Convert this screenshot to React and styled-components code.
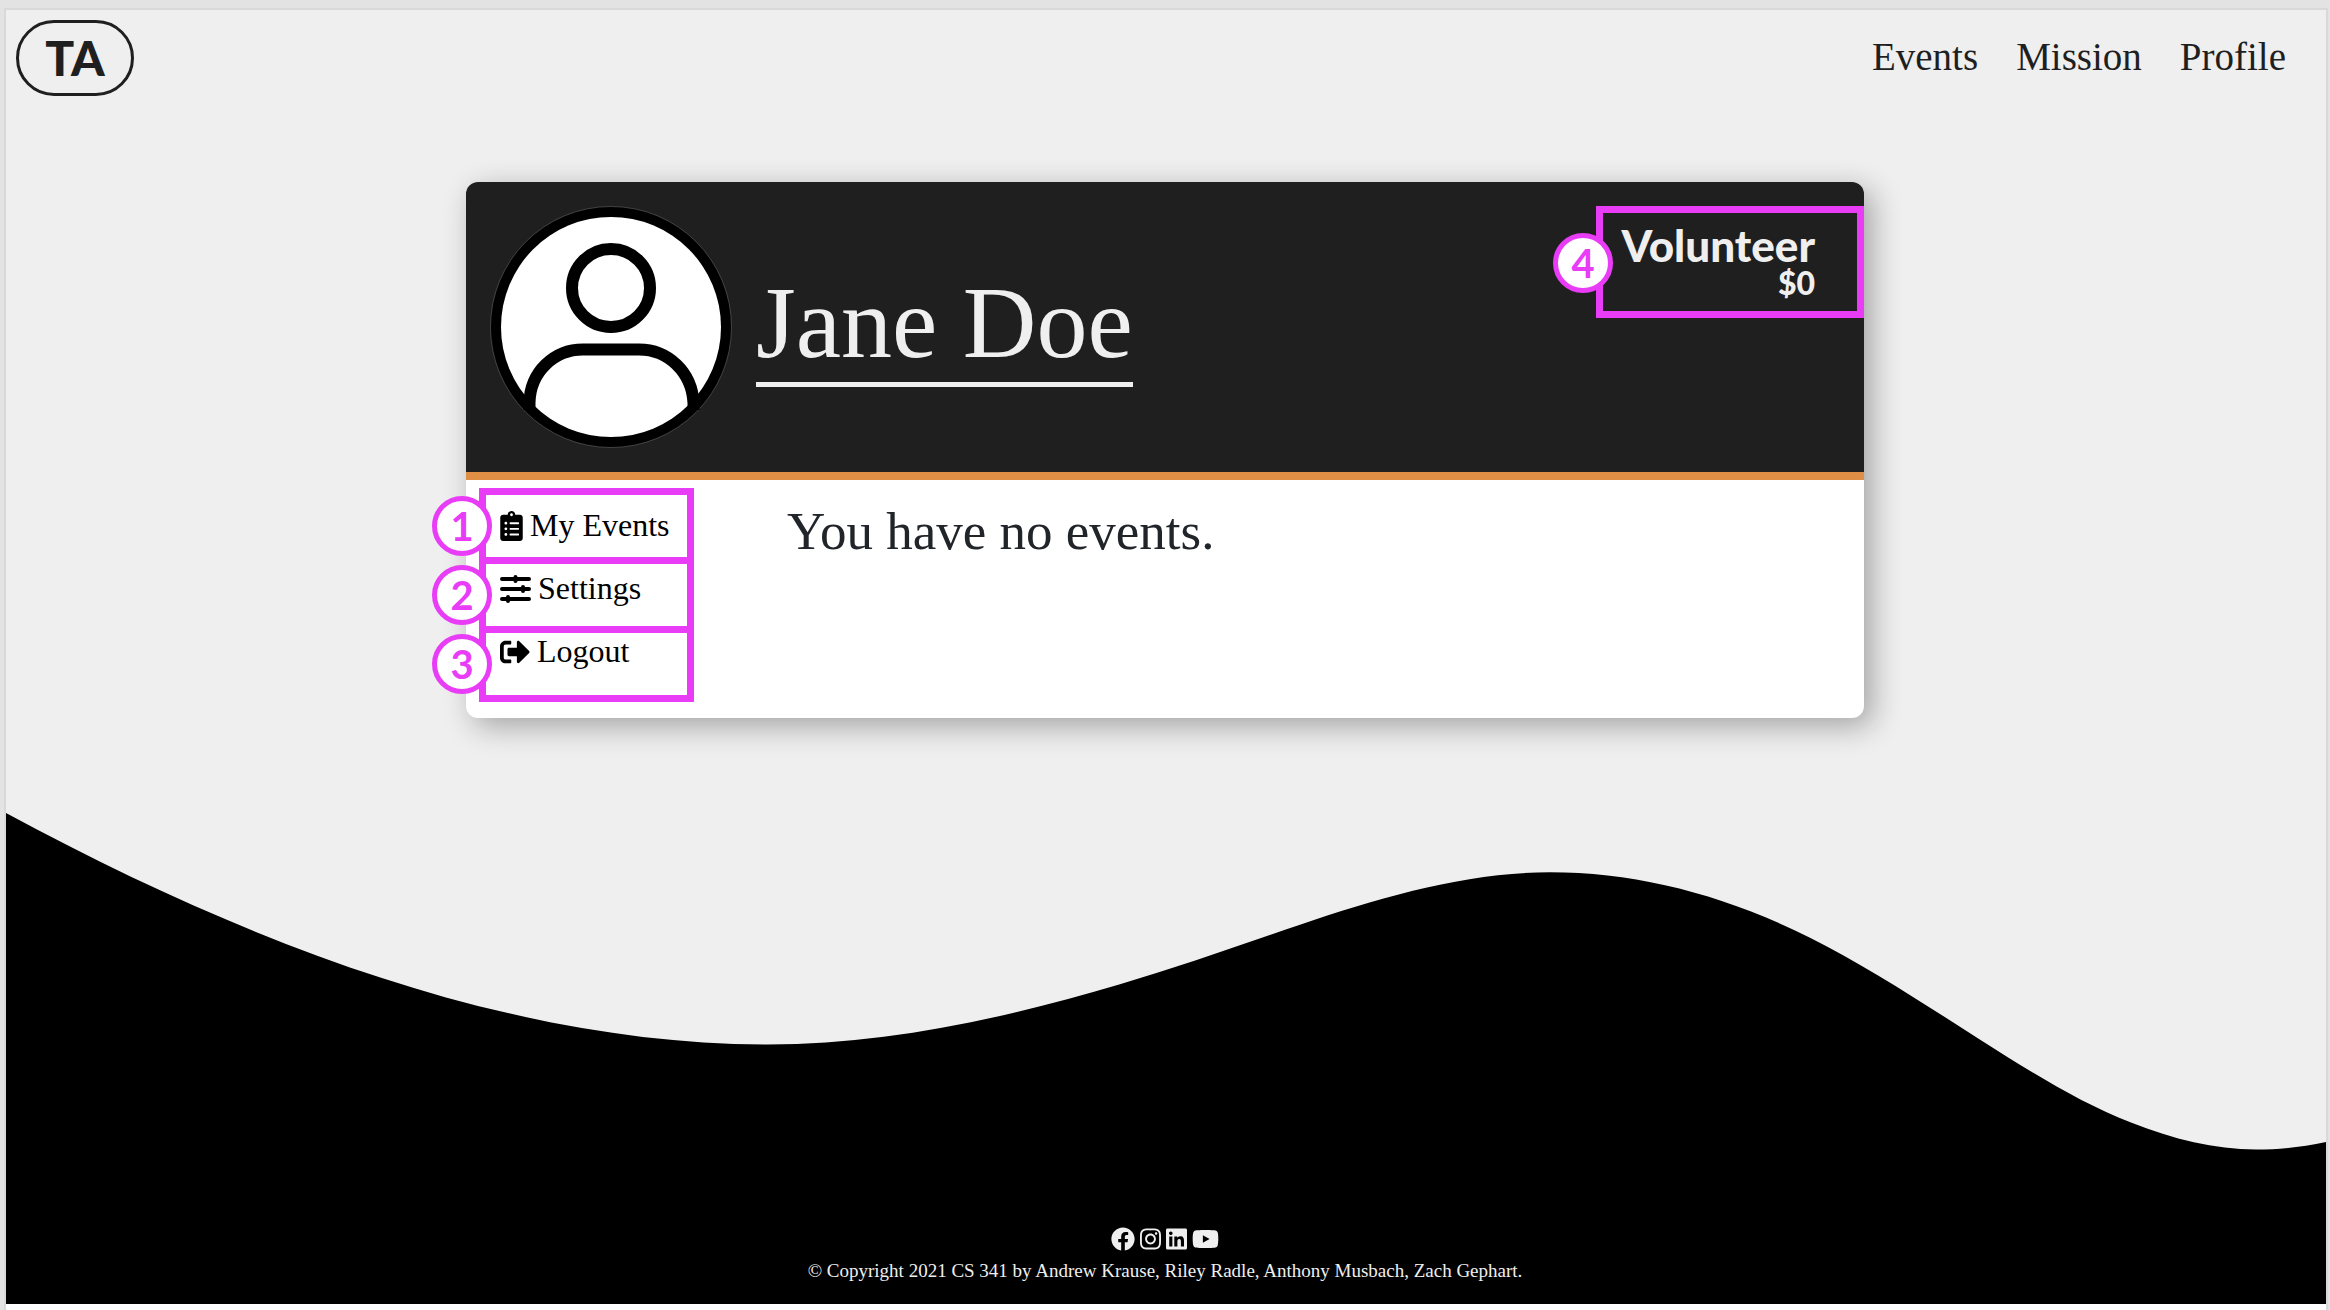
import React from "react";
import styled, { createGlobalStyle } from "styled-components";
import {
  FaClipboardList,
  FaSignOutAlt,
  FaFacebook,
  FaInstagram,
  FaLinkedin,
  FaYoutube,
} from "react-icons/fa";

const ink = "#1f1f1f";
const paper = "#efefef";
const pink = "#e83cf7";
const serif = '"Liberation Serif", "Times New Roman", serif';
const rounded = 'Lato, "Open Sans", sans-serif';

const GlobalStyle = createGlobalStyle`
  *, *::before, *::after { box-sizing: border-box; }
  body { margin: 0; background: #e3e3e3; font-family: ${serif}; color: ${ink}; }
  a { color: inherit; text-decoration: none; }
  h1, p { margin: 0; padding: 0; font-weight: inherit; }
  svg { display: block; flex: none; }
`;

const Screen = styled.div`
  display: flex;
  flex-direction: column;
  min-height: 100vh;
  padding: 8px 2px 0 4px;
`;

const Frame = styled.div`
  display: flex;
  flex: 1;
  flex-direction: column;
  border: solid #d9d9d9;
  border-width: 2px 2px 0;
  background: ${paper};
`;

const TopBar = styled.header`
  display: flex;
  align-items: flex-start;
  justify-content: space-between;
  padding: 10px 40px 0 10px;
`;

const Logo = styled.a`
  display: flex;
  align-items: center;
  justify-content: center;
  width: 118px;
  height: 76px;
  border: 3px solid ${ink};
  border-radius: 38px;
  font: 900 48px/48px ${rounded};
`;

const NavLinks = styled.nav`
  display: flex;
  gap: 38px;
  padding-top: 13px;
  font-size: 39px;
  line-height: 48px;
`;

const Card = styled.main`
  align-self: center;
  width: 60vw;
  margin: 86px 2px 94px 0;
  border-radius: 12px;
  background: #fff;
  box-shadow: 8px 8px 30px rgba(0, 0, 0, 0.32);
`;

const CardHeader = styled.div`
  display: flex;
  align-items: flex-start;
  padding: 24px 0 24px 24px;
  background: ${ink};
  border-bottom: 8px solid #df8f45;
  border-radius: 12px 12px 0 0;
`;

const Name = styled.h1`
  margin: 64px auto 0 24px;
  padding-bottom: 6px;
  border-bottom: 5px solid ${paper};
  color: ${paper};
  font-size: 102px;
  font-weight: 400;
  line-height: 106px;
`;

const Rank = styled.div`
  position: relative;
  width: 268px;
  height: 112px;
  padding: 14px 42px 0 0;
  border: 7px solid ${pink};
  color: ${paper};
  text-align: right;
  font: 900 44px/36px ${rounded};
`;

const Amount = styled.p`
  font-size: 32px;
  line-height: 40px;
`;

const CardBody = styled.div`
  display: flex;
  min-height: 238px;
`;

const Menu = styled.nav`
  position: relative;
  width: 321px;
  padding: 14px 0 0 34px;
`;

const MenuItem = styled.a`
  display: flex;
  align-items: center;
  gap: 7px;
  height: 63px;
  color: #000;
  font-size: 32px;
`;

const Callouts = styled.div`
  position: absolute;
  top: 8px;
  left: 13px;
  width: 215px;
`;

const CalloutBox = styled.div`
  position: relative;
  height: 76px;
  border: 7px solid ${pink};
  & + & { margin-top: -7px; }
`;

const Badge = styled.span`
  position: absolute;
  top: ${(p) => p.$top}px;
  left: ${(p) => p.$left}px;
  display: flex;
  align-items: center;
  justify-content: center;
  width: 60px;
  height: 60px;
  border: 5px solid ${pink};
  border-radius: 50%;
  background: #fff;
  color: ${pink};
  font: 700 40px/48px ${rounded};
`;

const Message = styled.p`
  padding-top: 24px;
  color: #212529;
  font-size: 53px;
  line-height: 54px;
`;

const Wave = styled.svg`
  width: 100%;
  height: auto;
`;

const Footer = styled.footer`
  display: flex;
  flex: 1;
  flex-direction: column;
  align-items: center;
  gap: 8px;
  padding: 67px 2px 8px 0;
  border-bottom: 6px solid #fff;
  background: #000;
  color: ${paper};
  font-size: 19px;
  line-height: 24px;
`;

const Social = styled.div`
  display: flex;
  gap: 5px;
`;

const Avatar = () => (
  <svg width="242" height="242" viewBox="0 0 242 242" role="img" aria-label="Profile picture">
    <circle cx="121" cy="121" r="120.5" fill="#000" stroke="#777" strokeWidth="0.5" />
    <circle cx="121" cy="121" r="110" fill="#fff" />
    <g fill="none" stroke="#000" strokeWidth="12">
      <circle cx="121" cy="82" r="39" />
      <path d="M39.500 204V197C40 166 64 143.500 93 143.500H149C178 143.500 202 166 203.500 197V204" />
    </g>
  </svg>
);

const Sliders = () => (
  <svg width="31" height="28" viewBox="0 0 31 28">
    <g stroke="#000" strokeLinecap="round" strokeWidth="4">
      <path d="M2 4H29M2 14H29M2 24H29" />
      <path d="M15.500 2V6M23 12V16M8 22V26" />
    </g>
  </svg>
);

const menu = [
  { label: "My Events", icon: <FaClipboardList size={30} style={{ width: 23 }} /> },
  { label: "Settings", icon: <Sliders /> },
  { label: "Logout", icon: <FaSignOutAlt size={30} /> },
];

const social = [
  ["Facebook", FaFacebook, 24],
  ["Instagram", FaInstagram, 21],
  ["LinkedIn", FaLinkedin, 21],
  ["YouTube", FaYoutube, 27],
];

export default function App() {
  return (
    <Screen>
      <GlobalStyle />
      <Frame>
        <TopBar>
          <Logo href="#home">TA</Logo>
          <NavLinks>
            <a href="#events">Events</a>
            <a href="#mission">Mission</a>
            <a href="#profile">Profile</a>
          </NavLinks>
        </TopBar>
        <Card>
          <CardHeader>
            <Avatar />
            <Name>Jane Doe</Name>
            <Rank>
              <p>Volunteer</p>
              <Amount>$0</Amount>
              <Badge $top={20} $left={-50}>4</Badge>
            </Rank>
          </CardHeader>
          <CardBody>
            <Menu>
              <Callouts>
                {[1, 2, 3].map((n) => (
                  <CalloutBox key={n}>
                    <Badge $top={1} $left={-54}>{n}</Badge>
                  </CalloutBox>
                ))}
              </Callouts>
              {menu.map((m) => (
                <MenuItem key={m.label} href="#menu">
                  {m.icon}
                  {m.label}
                </MenuItem>
              ))}
            </Menu>
            <Message>You have no events.</Message>
          </CardBody>
        </Card>
        <Wave viewBox="0 0 2320 348" aria-hidden="true">
          <path d="M0 1C250 136 510 232.500 762 232.500C879 232.500 997 207 1114 172.300C1174 154.500 1234 133.100 1294 112.700C1377 84.400 1461 60.300 1544 60.300C1631 60.300 1717 82.400 1804 125.700C1860 153.900 1917 191 1973 227C2024 259.400 2074 290.800 2125 310.600C2168 327.400 2208 337.500 2250 337.500C2274 337.500 2297 335 2320 330V349H0Z" />
        </Wave>
        <Footer>
          <Social>
            {social.map(([label, Icon, width]) => (
              <a key={label} href="#social" aria-label={label}>
                <Icon size={24} style={{ width }} />
              </a>
            ))}
          </Social>
          <p>© Copyright 2021 CS 341 by Andrew Krause, Riley Radle, Anthony Musbach, Zach Gephart.</p>
        </Footer>
      </Frame>
    </Screen>
  );
}
